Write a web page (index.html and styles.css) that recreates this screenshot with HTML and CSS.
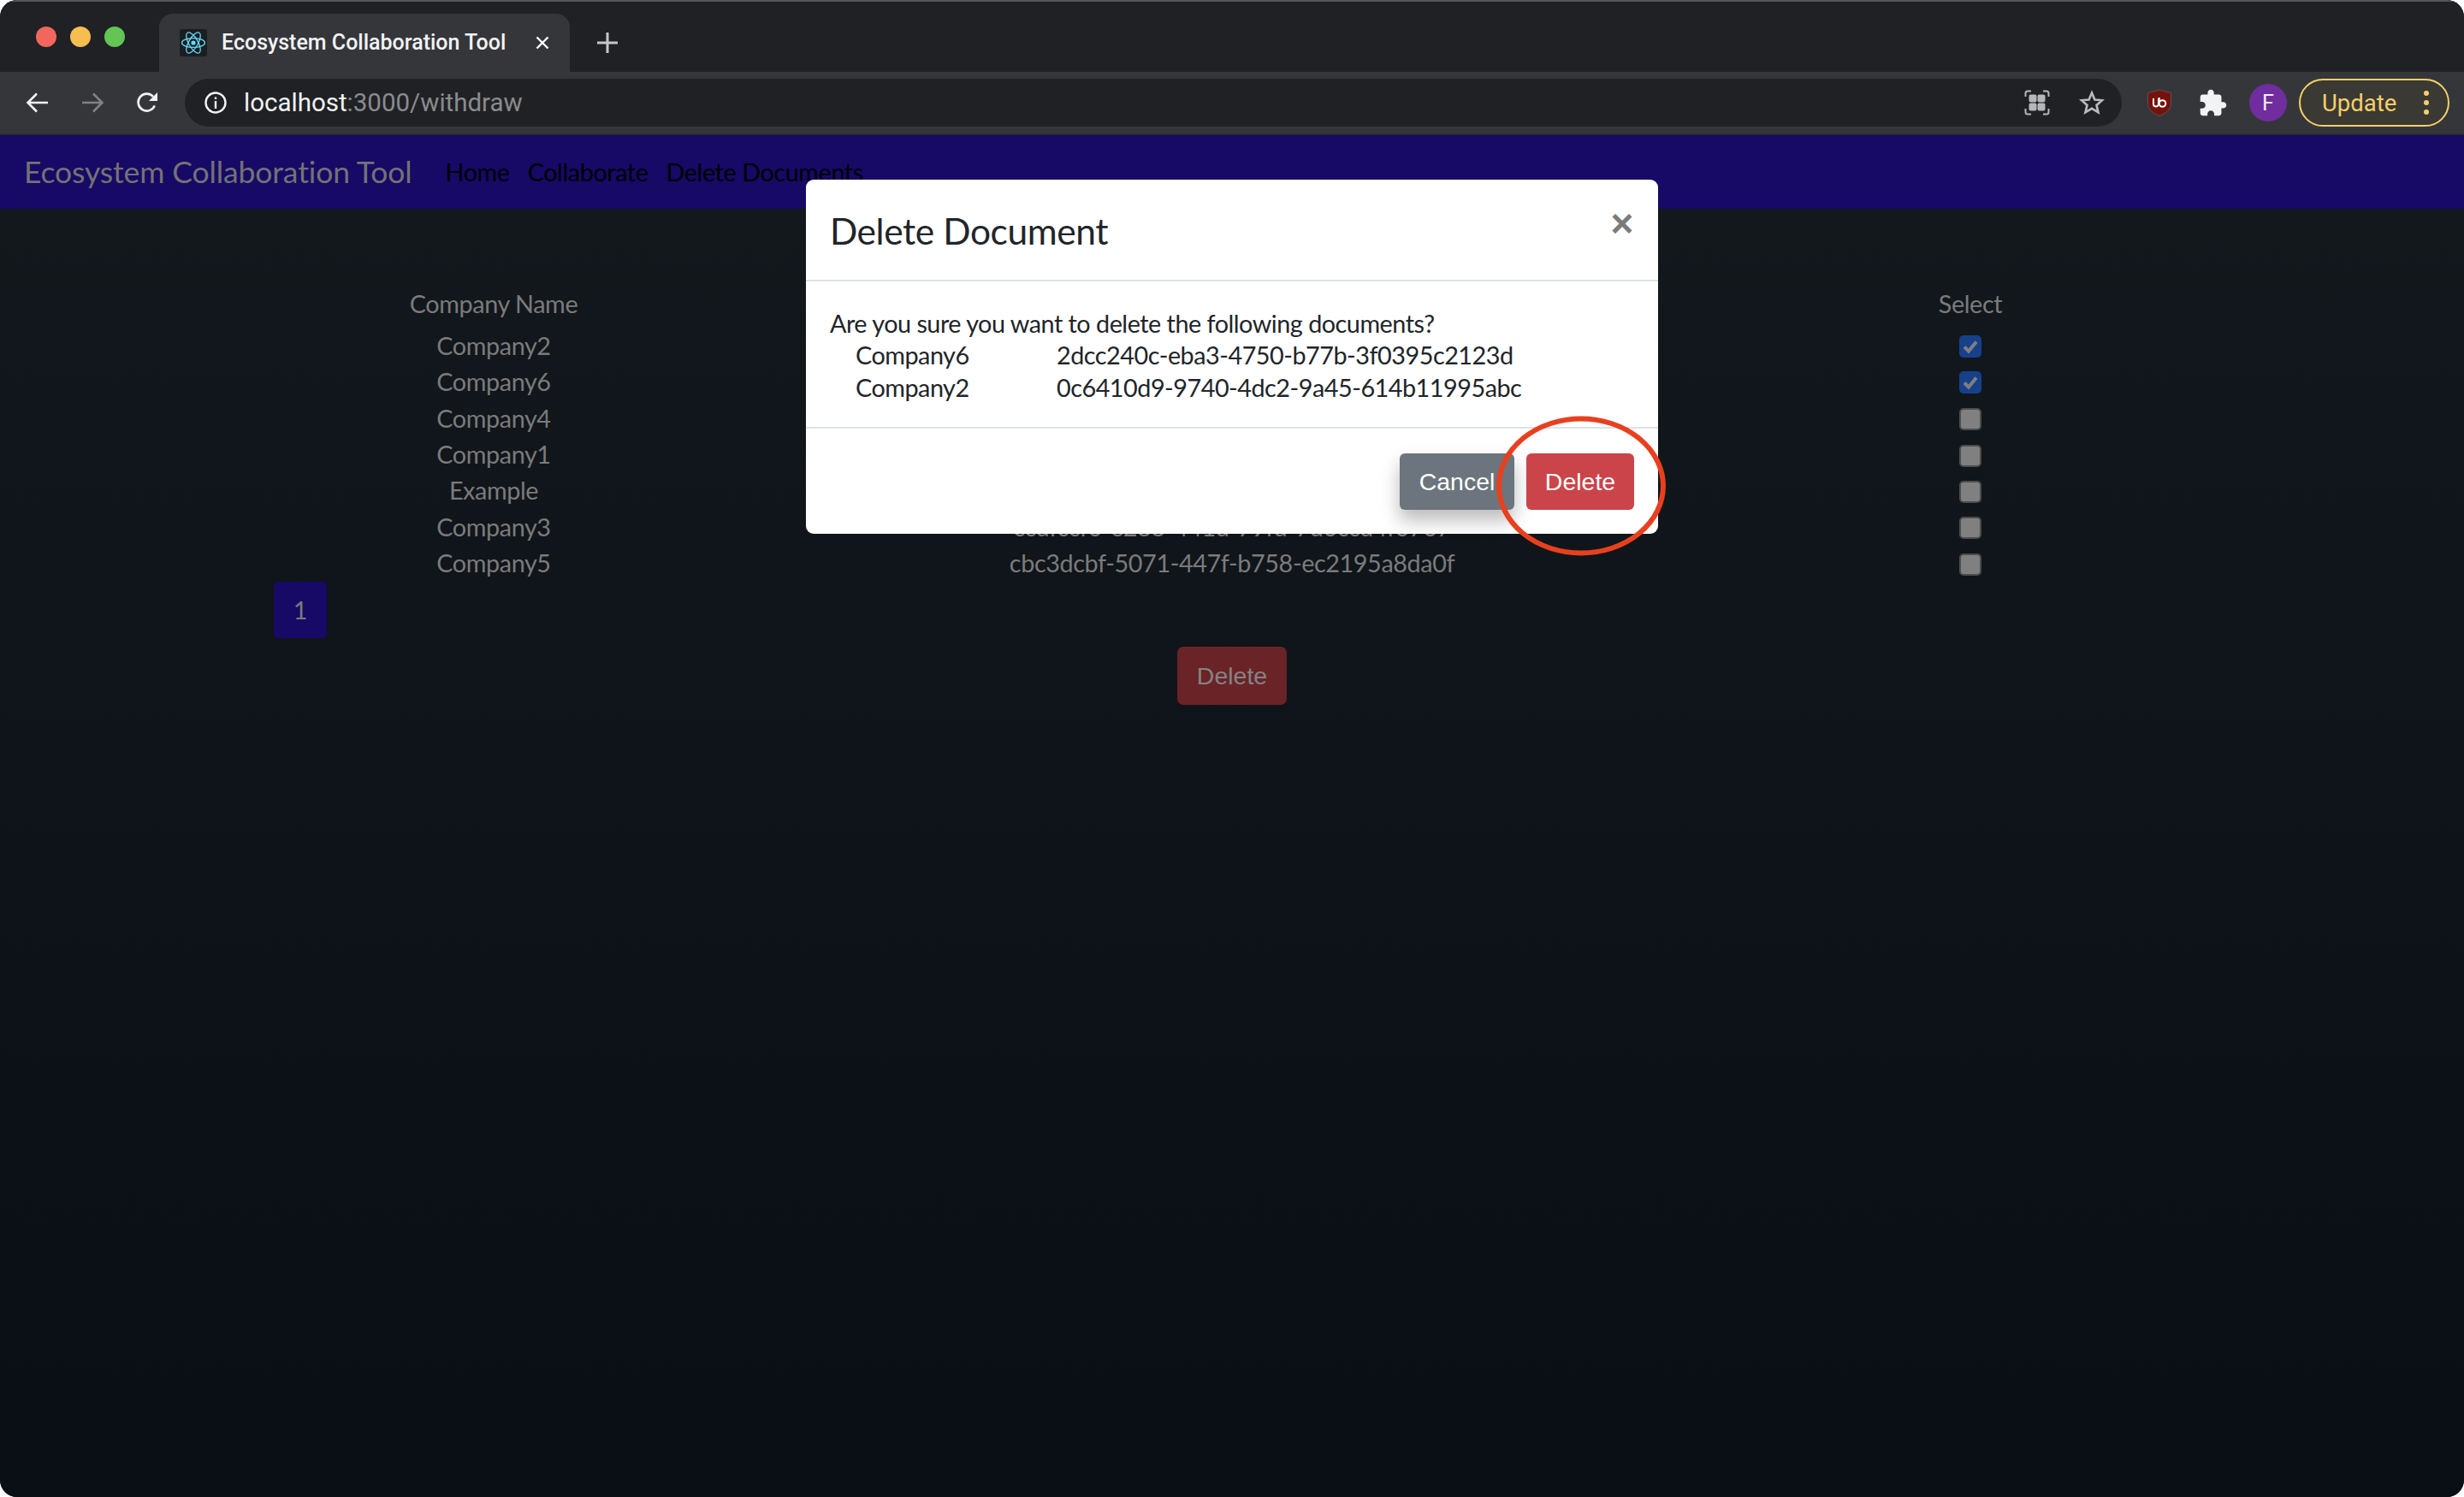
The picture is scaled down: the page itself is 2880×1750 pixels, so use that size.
FILE: index.html
```html
<!DOCTYPE html>
<html lang="en">
<head>
<meta charset="utf-8">
<title>Ecosystem Collaboration Tool</title>
<link rel="stylesheet" href="styles.css">
</head>
<body>
<div class="window">
  <header class="tabstrip">
    <div class="lights"><i class="light red"></i><i class="light yellow"></i><i class="light green"></i></div>
    <div class="tab">
      <span class="favicon">
        <svg viewBox="0 0 32 32" width="32" height="32"><rect width="32" height="32" rx="3" fill="#1b1e20"/><g fill="none" stroke="#61dafb" stroke-width="1.3"><ellipse cx="16" cy="16" rx="13.5" ry="5.4"/><ellipse cx="16" cy="16" rx="13.5" ry="5.4" transform="rotate(60 16 16)"/><ellipse cx="16" cy="16" rx="13.5" ry="5.4" transform="rotate(120 16 16)"/></g><circle cx="16" cy="16" r="2.6" fill="#61dafb"/></svg>
      </span>
      <span class="tab-title">Ecosystem Collaboration Tool</span>
      <svg class="tab-close" viewBox="0 0 16 16" width="16" height="16"><path d="M1.500 1.500l13 13M14.500 1.500l-13 13" stroke="#fff" stroke-width="2.400" fill="none"/></svg>
    </div>
    <svg class="new-tab" viewBox="0 0 24 24" width="24" height="24"><path d="M12 0v24M0 12h24" stroke="#c4c7c9" stroke-width="3" fill="none"/></svg>
  </header>
  <div class="toolbar">
    <svg class="nav-icon" viewBox="0 0 28 28" width="28" height="28"><path d="M26 14H3M13 3.500L2.500 14 13 24.500" stroke="#f1f3f4" stroke-width="2.600" fill="none"/></svg>
    <svg class="nav-icon" viewBox="0 0 28 28" width="28" height="28"><path d="M2 14h23M15 3.500L25.500 14 15 24.500" stroke="#808285" stroke-width="2.600" fill="none"/></svg>
    <svg class="nav-icon" viewBox="0 0 28 28" width="28" height="28"><path d="M22.800 17.500a10 10 0 1 1-1.700-10.500" stroke="#f1f3f4" stroke-width="2.600" fill="none"/><path d="M26 2v10H16z" fill="#f1f3f4"/></svg>
    <div class="omnibox">
      <svg class="info" viewBox="0 0 28 28" width="28" height="28"><circle cx="14" cy="14" r="11.500" stroke="#f1f3f4" stroke-width="2.400" fill="none"/><path d="M12.800 12h2.400v9h-2.400zM12.800 7.500h2.400v2.400h-2.400z" fill="#f1f3f4"/></svg>
      <span class="url">localhost<span class="url-dim">:3000/withdraw</span></span>
      <svg class="omni-icon" viewBox="0 0 30 30" width="30" height="30"><g fill="none" stroke="#b4b6b8" stroke-width="2"><path d="M1.500 8V4Q1.500 1.500 4 1.500h4M22 1.500h4q2.500 0 2.500 2.500v4M28.500 22v4q0 2.500-2.500 2.500h-4M8 28.500H4q-2.500 0-2.500-2.500v-4"/></g><g fill="#b4b6b8"><rect x="5.500" y="5.500" width="9" height="9" rx="2"/><rect x="15.500" y="5.500" width="9" height="9" rx="2"/><rect x="5.500" y="15.500" width="9" height="9" rx="2"/><rect x="15.500" y="15.500" width="9" height="9" rx="2"/></g></svg>
      <svg class="omni-icon star" viewBox="0 0 30 30" width="30" height="30"><path d="M15 3.500l3.400 8 8.600.7-6.500 5.700 2 8.400L15 21.800l-7.500 4.500 2-8.400L3 12.200l8.600-.7z" stroke="#b9bbbe" stroke-width="2.600" fill="none"/></svg>
    </div>
    <div class="extensions">
      <svg class="ublock" viewBox="0 0 30 32" width="30" height="32"><path d="M15 1l13.500 3.500V17C28.500 24 22 29 15 31.500 8 29 1.500 24 1.500 17V4.500z" fill="#76120d" stroke="#5c5052"/><path d="M8 11v6.500a3 3 0 0 0 6 0V11" stroke="#fff" stroke-width="2" fill="none"/><circle cx="18.500" cy="17" r="3.800" stroke="#fff" stroke-width="2" fill="none"/><path d="M14.700 10v7" stroke="#fff" stroke-width="2"/></svg>
      <svg class="puzzle" viewBox="1.500 1 22 21" width="32" height="32"><path fill="#f1f3f4" d="M20.500 11H19V7c0-1.100-.9-2-2-2h-4V3.500C13 2.120 11.880 1 10.500 1S8 2.120 8 3.500V5H4c-1.100 0-1.990.9-1.990 2v3.800H3.500c1.490 0 2.700 1.210 2.700 2.700s-1.210 2.700-2.700 2.700H2V20c0 1.100.9 2 2 2h3.800v-1.500c0-1.490 1.210-2.700 2.700-2.700 1.490 0 2.700 1.210 2.700 2.700V22H17c1.100 0 2-.9 2-2v-4h1.500c1.380 0 2.500-1.120 2.500-2.500S21.880 11 20.500 11z"/></svg>
      <span class="avatar">F</span>
    </div>
    <div class="update">
      <span class="update-label">Update</span>
      <span class="update-dots"><i></i><i></i><i></i></span>
    </div>
  </div>
  <div class="app">
    <nav class="navbar">
      <span class="brand">Ecosystem Collaboration Tool</span>
      <a class="nav-link">Home</a>
      <a class="nav-link">Collaborate</a>
      <a class="nav-link">Delete Documents</a>
    </nav>
    <main class="content">
      <div class="doc-table">
        <div class="doc-head"><span>Company Name</span><span>Document ID</span><span>Select</span></div>
        <div class="doc-row"><span>Company2</span><span>0c6410d9-9740-4dc2-9a45-614b11995abc</span><span class="box checked"><svg viewBox="0 0 26 26" width="26" height="26"><path d="M6 13.500l5 5 9-11" stroke="#7f7f7f" stroke-width="4" fill="none"/></svg></span></div>
        <div class="doc-row"><span>Company6</span><span>2dcc240c-eba3-4750-b77b-3f0395c2123d</span><span class="box checked"><svg viewBox="0 0 26 26" width="26" height="26"><path d="M6 13.500l5 5 9-11" stroke="#7f7f7f" stroke-width="4" fill="none"/></svg></span></div>
        <div class="doc-row"><span>Company4</span><span></span><span class="box"></span></div>
        <div class="doc-row"><span>Company1</span><span></span><span class="box"></span></div>
        <div class="doc-row"><span>Example</span><span></span><span class="box"></span></div>
        <div class="doc-row"><span>Company3</span><span>ccdfccf6-e288-441d-79fd-7d6ccd4f6767</span><span class="box"></span></div>
        <div class="doc-row"><span>Company5</span><span>cbc3dcbf-5071-447f-b758-ec2195a8da0f</span><span class="box"></span></div>
      </div>
      <div class="pagination"><span class="page">1</span></div>
      <div class="actions"><button class="btn-dim">Delete</button></div>
    </main>
    <section class="modal">
      <div class="modal-head">
        <h2 class="modal-title">Delete Document</h2>
        <span class="modal-close">×</span>
      </div>
      <div class="modal-body">
        <p class="modal-text">Are you sure you want to delete the following documents?</p>
        <div class="modal-doc"><span>Company6</span><span>2dcc240c-eba3-4750-b77b-3f0395c2123d</span></div>
        <div class="modal-doc"><span>Company2</span><span>0c6410d9-9740-4dc2-9a45-614b11995abc</span></div>
      </div>
      <div class="modal-foot">
        <button class="btn btn-cancel">Cancel</button>
        <button class="btn btn-delete">Delete</button>
      </div>
      <svg class="ring" viewBox="0 0 200 164" width="200" height="164"><ellipse cx="100" cy="82" rx="96" ry="78.500" fill="none" stroke="#e8401f" stroke-width="6"/></svg>
    </section>
  </div>
</div>
</body>
</html>
```
FILE: styles.css
```css
* { box-sizing: border-box; }
html, body { margin: 0; height: 100%; background: #fff; }
body { width: 2880px; height: 1750px; overflow: hidden; }
.window {
  width: 2880px; height: 1750px; border-radius: 20px; overflow: hidden;
  display: flex; flex-direction: column; background: #202124;
}
.tabstrip {
  height: 84px; flex: none; display: flex; align-items: flex-start;
  background: #202124; border-top: 2px solid #55565a;
}
.lights { display: flex; gap: 16px; width: 186px; padding: 29px 0 0 42px; }
.light { width: 24px; height: 24px; border-radius: 50%; display: block; }
.red { background: #f1675d; }
.yellow { background: #f6bd50; }
.green { background: #62c554; }
.tab {
  width: 480px; height: 68px; margin-top: 14px; background: #35363a;
  border-radius: 16px 16px 0 0; display: flex; align-items: center; padding: 0 24px;
}
.favicon { width: 32px; height: 32px; margin-right: 17px; flex: none; }
.favicon svg, .tab-close, .new-tab { display: block; }
.tab-title { font: 500 25px "Roboto", sans-serif; color: #f1f3f4; width: 367px; white-space: nowrap; margin-top: -1px; flex: none; }
.tab-close { flex: none; }
.new-tab { margin: 36px 0 0 32px; }
.toolbar {
  height: 74px; flex: none; background: #35363a; border-bottom: 2px solid #2a2b2e;
  display: flex; align-items: center; padding: 0 16px 0 30px;
}
.nav-icon { flex: none; margin-right: 36px; }
.nav-icon:nth-child(3) { margin-right: 30px; }
.omnibox {
  width: 2264px; height: 56px; flex: none; background: #202124; border-radius: 28px;
  display: flex; align-items: center; padding: 0 20px 0 22px;
}
.info { flex: none; margin-right: 19px; }
.url { font: 400 29.500px "Roboto", sans-serif; color: #f1f3f4; flex: 1; white-space: nowrap; }
.url-dim { color: #8a8c8e; }
.omni-icon { flex: none; }
.star { margin-left: 34px; }
.extensions { display: flex; align-items: center; flex: none; margin-left: 29px; }
.ublock { margin-right: 32px; }
.puzzle { margin-right: 26px; }
.avatar {
  width: 44px; height: 44px; border-radius: 50%; background: #702d9e; color: #f3e9f8;
  font: 400 25px "Roboto", sans-serif; display: flex; align-items: center; justify-content: center;
}
.update {
  width: 176px; height: 56px; margin-left: 14px; flex: none; border: 2px solid #f6cf6a;
  border-radius: 28px; background: #3a3933; display: flex; align-items: center;
  justify-content: space-between; padding: 0 22px 0 25px;
}
.update-label { font: 400 27.500px "Roboto", sans-serif; color: #f6cf6a; }
.update-dots { display: flex; flex-direction: column; gap: 5px; }
.update-dots i { width: 6px; height: 6px; border-radius: 50%; background: #f6cf6a; display: block; }
.app {
  flex: 1; position: relative; display: flex; flex-direction: column;
  font-family: "Lato", sans-serif; color: #7b7b7b; letter-spacing: -.42px;
}
.navbar {
  height: 86px; flex: none; background: #170966; display: flex; align-items: center; padding: 0 0 0 28px;
}
.brand { font-size: 35.500px; letter-spacing: -.12px; color: #737274; margin-right: 39px; white-space: nowrap; margin-top: -1px; }
.nav-link { font-size: 28.800px; color: #000; margin-right: 21px; white-space: nowrap; }
.content {
  flex: 1; padding: 89px 320px 0;
  background: linear-gradient(#12181c, #0a0e15);
}
.doc-head, .doc-row {
  display: grid; grid-template-columns: 514px 1fr 514px; align-items: center;
  justify-items: center; font-size: 28.800px;
}
.doc-head { height: 50px; padding-bottom: 7px; }
.doc-row { height: 42.330px; }
.box {
  width: 26px; height: 26px; border-radius: 5px; background: #808080; border: 2px solid #4c4c4c;
  margin-top: 3px;
}
.box.checked { background: #17408a; border: 0; margin-top: 2px; }
.box svg { display: block; }
.pagination { display: flex; margin-top: 1px; }
.page {
  width: 62px; height: 66px; border-radius: 5px; background: #170966; color: #7b7b7b;
  font-size: 28.800px; display: flex; align-items: center; justify-content: center;
}
.actions { display: flex; justify-content: center; margin-top: 10px; }
.btn-dim {
  width: 128px; height: 68px; border: 0; border-radius: 7px; background: #6a2327; color: #848484;
  font: 400 28.500px "Liberation Sans", sans-serif; padding: 0;
}
.modal {
  position: absolute; left: 942px; top: 52px; width: 996px; height: 414px;
  background: #fff; border-radius: 9px; color: #212529; display: flex; flex-direction: column;
}
.modal-head {
  height: 119px; flex: none; border-bottom: 2px solid #dee2e6;
  display: flex; justify-content: space-between; align-items: flex-start; padding: 0 28px;
}
.modal-title { margin: 33px 0 0; font-size: 42.500px; font-weight: 400; line-height: 54px; color: #212529; }
.modal-close {
  font: 700 46px/44px "Liberation Sans", sans-serif; color: #7b7b7b; margin: 29px 1px 0 0;
}
.modal-body { height: 172px; flex: none; border-bottom: 2px solid #dee2e6; padding: 30px 28px 0; font-size: 28.800px; letter-spacing: -.5px; }
.modal-text { margin: 0 0 -1px; line-height: 38px; }
.modal-doc { display: grid; grid-template-columns: 235px 1fr; padding-left: 30px; line-height: 38px; }
.modal-foot { flex: 1; display: flex; justify-content: flex-end; align-items: flex-start; gap: 14px; padding: 29px 28px 0; }
.btn {
  height: 66px; border: 0; border-radius: 6px; color: #fff; padding: 0; letter-spacing: 0;
  font: 400 28.500px "Liberation Sans", sans-serif;
}
.btn-cancel { width: 134px; background: #6c757d; box-shadow: 0 12px 22px rgba(0,0,0,.28); }
.btn-delete { width: 126px; background: #cb444a; }
.ring { position: absolute; left: 806px; top: 276px; display: block; overflow: visible; }
```
